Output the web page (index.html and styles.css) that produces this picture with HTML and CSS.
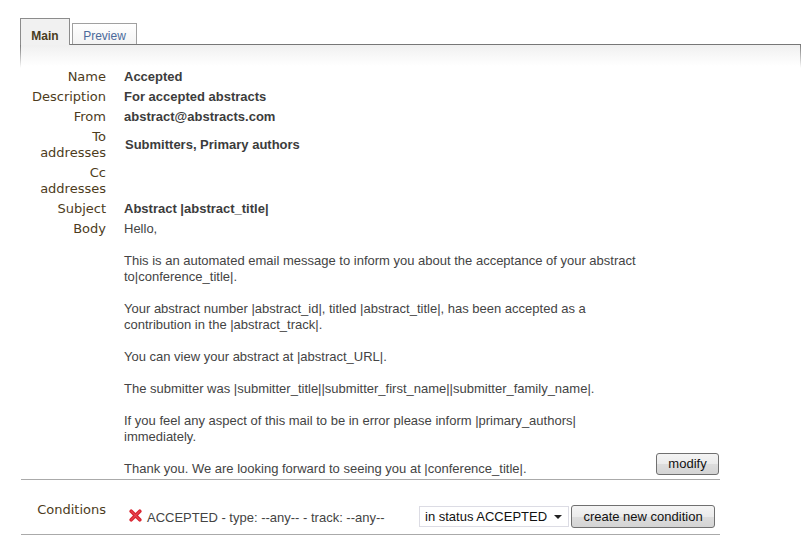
FILE: index.html
```html
<!DOCTYPE html>
<html>
<head>
<meta charset="utf-8">
<link rel="stylesheet" href="styles.css">
</head>
<body>
<div class="page">
  <div class="tabs">
    <div class="tab tab-active">Main</div>
    <div class="tab tab-other">Preview</div>
  </div>
  <div class="panel">
    <div class="form">
      <div class="row">
        <div class="label">Name</div>
        <div class="value strong">Accepted</div>
      </div>
      <div class="row">
        <div class="label">Description</div>
        <div class="value strong">For accepted abstracts</div>
      </div>
      <div class="row">
        <div class="label">From</div>
        <div class="value strong">abstract@abstracts.com</div>
      </div>
      <div class="row">
        <div class="label">To<br>addresses</div>
        <div class="value strong centered shift">Submitters, Primary authors</div>
      </div>
      <div class="row">
        <div class="label">Cc<br>addresses</div>
        <div class="value strong centered"></div>
      </div>
      <div class="row">
        <div class="label">Subject</div>
        <div class="value strong">Abstract |abstract_title|</div>
      </div>
      <div class="row row-body">
        <div class="label">Body</div>
        <div class="value body-value">
          <div class="body-text">
            <p>Hello,</p>
            <p>This is an automated email message to inform you about the acceptance of your abstract<br>to|conference_title|.</p>
            <p>Your abstract number |abstract_id|, titled |abstract_title|, has been accepted as a<br>contribution in the |abstract_track|.</p>
            <p>You can view your abstract at |abstract_URL|.</p>
            <p>The submitter was |submitter_title||submitter_first_name||submitter_family_name|.</p>
            <p>If you feel any aspect of this mail to be in error please inform |primary_authors|<br>immediately.</p>
            <p>Thank you. We are looking forward to seeing you at |conference_title|.</p>
          </div>
          <button class="btn btn-modify" type="button">modify</button>
        </div>
      </div>
      <div class="row row-cond">
        <div class="label label-cond">Conditions</div>
        <div class="value cond-value">
          <svg class="x-icon" width="13" height="13" viewBox="0 0 13 13">
            <path d="M2.2 2.2 L10.8 10.8 M10.8 2.2 L2.2 10.8" stroke="#d8232f" stroke-width="3.6" stroke-linecap="round" fill="none"/>
            <path d="M2.2 2.2 L10.8 10.8 M10.8 2.2 L2.2 10.8" stroke="#f0606a" stroke-width="1.2" stroke-linecap="round" fill="none" opacity="0.6"/>
          </svg>
          <span class="cond-text">ACCEPTED - type: --any-- - track: --any--</span>
          <span class="select-wrap">
            <select class="status-select">
              <option>in status ACCEPTED</option>
            </select>
            <svg class="select-arrow" width="8" height="4" viewBox="0 0 8 4"><path d="M0 0 H8 L4 4 Z" fill="#222"/></svg>
          </span>
          <button class="btn btn-create" type="button">create new condition</button>
        </div>
      </div>
    </div>
  </div>
</div>
</body>
</html>
```

FILE: styles.css
```css
html, body {
  margin: 0;
  padding: 0;
  background: #fff;
}

.page {
  padding: 18px 0 0 20px;
  font-family: "Liberation Sans", Arial, sans-serif;
  font-size: 13px;
  color: #444;
}

.tabs {
  display: flex;
  align-items: flex-end;
  height: 26px;
  position: relative;
  z-index: 1;
}

.tab {
  box-sizing: border-box;
  font-family: "Liberation Sans", Arial, sans-serif;
  font-size: 12px;
  line-height: 14px;
  text-align: center;
  border: 1px solid #999;
  border-bottom: 0;
}

.tab-active {
  width: 50px;
  height: 27px;
  margin-bottom: -1px;
  padding-top: 10px;
  font-weight: bold;
  color: #4a3d22;
  background: #f1f1f1;
  border-color: #8c8c8c;
}

.tab-other {
  width: 65px;
  height: 21px;
  margin-left: 2px;
  padding-top: 5px;
  color: #4b6a9b;
  background: linear-gradient(#ffffff, #f3f3f3);
  border-color: #a0a0a0;
}

.panel {
  width: 781px;
  box-sizing: border-box;
  padding: 23px 0 20px 1px;
  background:
    linear-gradient(#777, #777) left top / 100% 1px no-repeat,
    linear-gradient(#777, rgba(119,119,119,0)) left top / 1px 24px no-repeat,
    linear-gradient(#777, rgba(119,119,119,0)) right top / 1px 24px no-repeat,
    linear-gradient(#efefef, #ffffff) left top / 100% 22px no-repeat;
}

.form {
  width: 699px;
}

.row {
  display: flex;
  align-items: flex-start;
}

.label {
  width: 85px;
  flex: none;
  padding: 2px 4px 2px 0;
  text-align: right;
  font-family: "DejaVu Sans", Verdana, sans-serif;
  font-size: 13px;
  line-height: 16px;
  color: #4d3c1c;
}

.value {
  flex: 1;
  padding: 2px 0 2px 14px;
  line-height: 16px;
  color: #444;
}

.strong {
  font-weight: bold;
  color: #3c3c3c;
}

.centered {
  align-self: center;
}

.shift {
  padding-left: 15px;
}

.row-body {
  border-bottom: 1px solid #aaa;
}

.body-value {
  display: flex;
  align-items: flex-end;
  padding-bottom: 2px;
}

.body-text {
  white-space: nowrap;
}

.body-text p {
  margin: 0 0 16px 0;
}

.body-text p:last-child {
  margin-bottom: 0;
}

.btn {
  font-family: "Liberation Sans", Arial, sans-serif;
  font-size: 13px;
  color: #111;
  border: 1px solid #707070;
  border-radius: 3px;
  background: linear-gradient(#f4f4f4 0%, #ebebeb 50%, #dddddd 51%, #d4d4d4 100%);
  padding: 0;
  box-sizing: border-box;
  line-height: 16px;
}

.btn-modify {
  width: 63px;
  height: 22px;
  margin-left: auto;
  margin-right: 1px;
  margin-bottom: 2px;
}

.row-cond {
  border-bottom: 1px solid #aaa;
  height: 54px;
}

.label-cond {
  padding-top: 22px;
}

.cond-value {
  display: flex;
  align-items: center;
  padding-top: 25px;
  padding-left: 19px;
}

.x-icon {
  flex: none;
  margin-top: -2px;
}

.cond-text {
  margin-left: 5px;
  margin-top: 2px;
  color: #444;
}

.select-wrap {
  position: relative;
  margin-left: auto;
  display: block;
  height: 21px;
}

.status-select {
  appearance: none;
  -webkit-appearance: none;
  width: 150px;
  height: 21px;
  box-sizing: border-box;
  border: 1px solid #dcdce4;
  border-radius: 0;
  background: #fff;
  font-family: "Liberation Sans", Arial, sans-serif;
  font-size: 13px;
  color: #111;
  padding: 0 0 0 5px;
  margin: 0;
  outline: none;
}

.select-arrow {
  position: absolute;
  right: 7px;
  top: 9px;
  pointer-events: none;
}

.btn-create {
  width: 144px;
  height: 23px;
  margin-left: 2px;
  margin-right: 5px;
}
```
